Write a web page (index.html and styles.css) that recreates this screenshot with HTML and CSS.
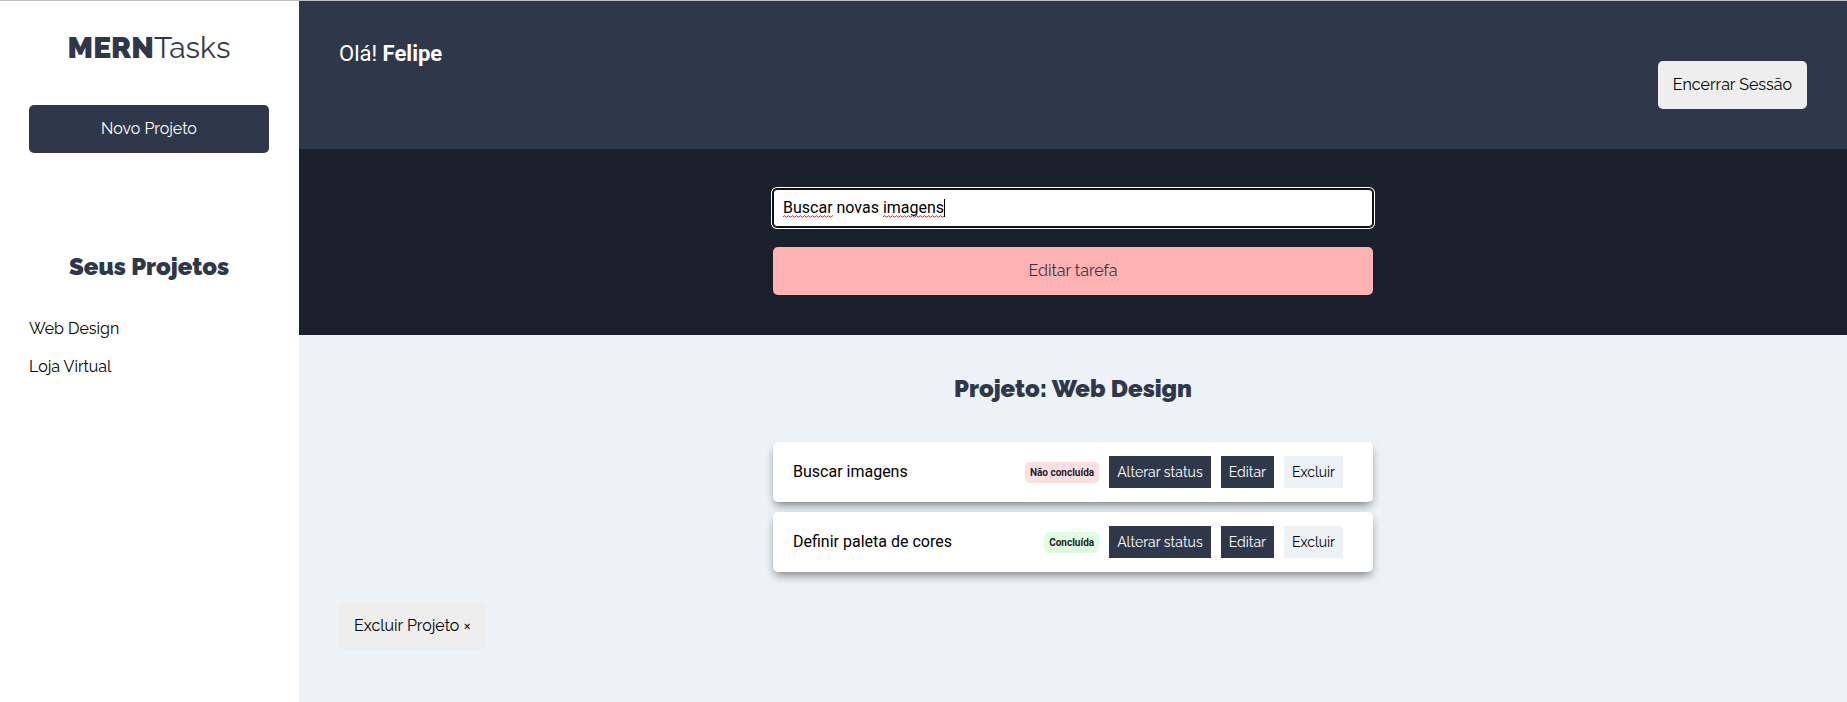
FILE: index.html
```html
<!DOCTYPE html>
<html lang="pt-BR">
<head>
<meta charset="utf-8">
<meta name="viewport" content="width=device-width, initial-scale=1">
<title>MERNTasks</title>
<link rel="stylesheet" href="styles.css">
</head>
<body>
<div class="app">
  <aside class="sidebar">
    <h1 class="logo">MERN<span class="logo-light">Tasks</span></h1>
    <button type="button" class="btn btn-primary btn-block">Novo Projeto</button>
    <section class="projects">
      <h2 class="title">Seus Projetos</h2>
      <ul class="project-list">
        <li><button type="button" class="project-link">Web Design</button></li>
        <li><button type="button" class="project-link">Loja Virtual</button></li>
      </ul>
    </section>
  </aside>
  <div class="main">
    <header class="header">
      <p class="greeting">Olá! <strong>Felipe</strong></p>
      <button type="button" class="btn btn-plain logout">Encerrar Sessão</button>
    </header>
    <main>
      <form class="task-form">
        <div class="field">
          <input class="task-input" type="text" name="nome" aria-label="Nome da tarefa" value="Buscar novas imagens" spellcheck="false" autocomplete="off">
          <svg class="marks" viewBox="0 0 164 20" aria-hidden="true">
            <defs>
              <pattern id="wave" width="4" height="3" patternUnits="userSpaceOnUse" y="16">
                <path d="M0 2.2 L1 .8 L2 .8 L3 2.2 L4 2.2" fill="none" stroke="#f5303c" stroke-width="1"/>
              </pattern>
            </defs>
            <rect x="0" y="16" width="50" height="3" fill="url(#wave)"/>
            <rect x="100" y="16" width="61" height="3" fill="url(#wave)"/>
            <rect x="161" y="0" width="1" height="18" fill="#000"/>
          </svg>
        </div>
        <button type="submit" class="btn btn-edit btn-block">Editar tarefa</button>
      </form>
      <section class="tasks">
        <h2 class="title">Projeto: Web Design</h2>
        <ul class="task-list">
          <li class="task">
            <p class="task-name">Buscar imagens</p>
            <span class="badge badge-pending">Não concluída</span>
            <div class="actions">
              <button type="button" class="action action-dark">Alterar status</button>
              <button type="button" class="action action-dark">Editar</button>
              <button type="button" class="action action-light">Excluir</button>
            </div>
          </li>
          <li class="task">
            <p class="task-name">Definir paleta de cores</p>
            <span class="badge badge-done">Concluída</span>
            <div class="actions">
              <button type="button" class="action action-dark">Alterar status</button>
              <button type="button" class="action action-dark">Editar</button>
              <button type="button" class="action action-light">Excluir</button>
            </div>
          </li>
        </ul>
        <button type="button" class="btn btn-plain">Excluir Projeto ×</button>
      </section>
    </main>
  </div>
</div>
</body>
</html>
```
FILE: styles.css
```css
:root {
  --navy: #2f384a;
  --ink: #1a202c;
  --mist: #edf2f7;
  --sans: Roboto, "Liberation Sans", sans-serif;
  --display: Raleway, Lato, sans-serif;
}

* { box-sizing: border-box; }

body, h1, h2, p, ul { margin: 0; padding: 0; }
ul { list-style: none; }

body {
  font-family: var(--sans);
  font-size: 16px;
  line-height: 20px;
  color: #000;
  background: #fff;
}

button, input { font: inherit; margin: 0; }
button { cursor: pointer; }

.app {
  display: flex;
  min-height: 100vh;
  border-top: 1px solid #bfbfbf;
}

.sidebar {
  flex: 0 0 299px;
  padding: 28px 30px 30px 29px;
}

.logo {
  margin-bottom: 38px;
  font: 900 30px/38px var(--display);
  color: var(--navy);
  text-align: center;
}
.logo-light { font-weight: 400; }

.btn {
  display: block;
  height: 48px;
  padding: 0 15px;
  border: 0;
  border-radius: 5px;
  font: 400 16px/48px var(--display);
}
.btn-block { width: 100%; }
.btn-primary { background: var(--navy); color: #fff; }
.btn-plain { background: #eee; color: #000; }
.btn-edit { background: #feb2b2; color: var(--navy); }

.projects { margin-top: 100px; }

.title {
  font: 900 24px/28px var(--display);
  color: var(--navy);
  text-align: center;
}

.project-list {
  display: grid;
  gap: 18px;
  margin-top: 38px;
}
.project-link {
  display: block;
  padding: 0;
  border: 0;
  background: none;
  font: 400 16px/20px var(--display);
  color: #000;
}

.main {
  flex: 1;
  min-width: 0;
  background: var(--mist);
}

.header {
  display: flex;
  justify-content: space-between;
  align-items: flex-start;
  padding: 40px;
  background: var(--navy);
}
.greeting {
  font-size: 22px;
  line-height: 26px;
  color: #fff;
}
.logout { margin-top: 20px; }

.task-form {
  padding: 40px 20px;
  background: var(--ink);
}
.task-form > * {
  max-width: 600px;
  margin: 0 auto;
}
.task-form > .field { position: relative; margin-bottom: 20px; }
.task-input {
  display: block;
  width: 100%;
  height: 38px;
  padding: 0 9px 2px;
  border: 1px solid #101010;
  border-radius: 4px;
  outline: 0;
  box-shadow: 0 0 0 1px #101010, 0 0 0 2px #fff;
  background: #fff;
  color: #000;
}
.marks {
  position: absolute;
  left: 10px;
  top: 10px;
  width: 164px;
  height: 20px;
  pointer-events: none;
}

.tasks { padding: 40px; }
.task-list {
  display: grid;
  gap: 10px;
  max-width: 600px;
  margin: 39px auto 30px;
}
.task {
  display: flex;
  align-items: center;
  gap: 10px;
  height: 60px;
  padding: 0 30px 0 20px;
  border-radius: 5px;
  background: #fff;
  box-shadow: 0 5px 10px -2px rgba(0, 0, 0, .48);
}
.task-name { flex: 1; }

.badge {
  padding: 0 5px;
  border-radius: 5px;
  font-size: 10px;
  line-height: 21px;
  font-weight: 700;
  color: var(--ink);
}
.badge-pending { background: #fedfdf; }
.badge-done { background: #dfffdf; }

.actions { display: flex; gap: 10px; }
.action {
  height: 32px;
  padding: 0 8px;
  border: 0;
  font: 400 14px/32px var(--display);
}
.action-dark { background: var(--navy); color: #fff; }
.action-light { background: var(--mist); color: #000; }
```
